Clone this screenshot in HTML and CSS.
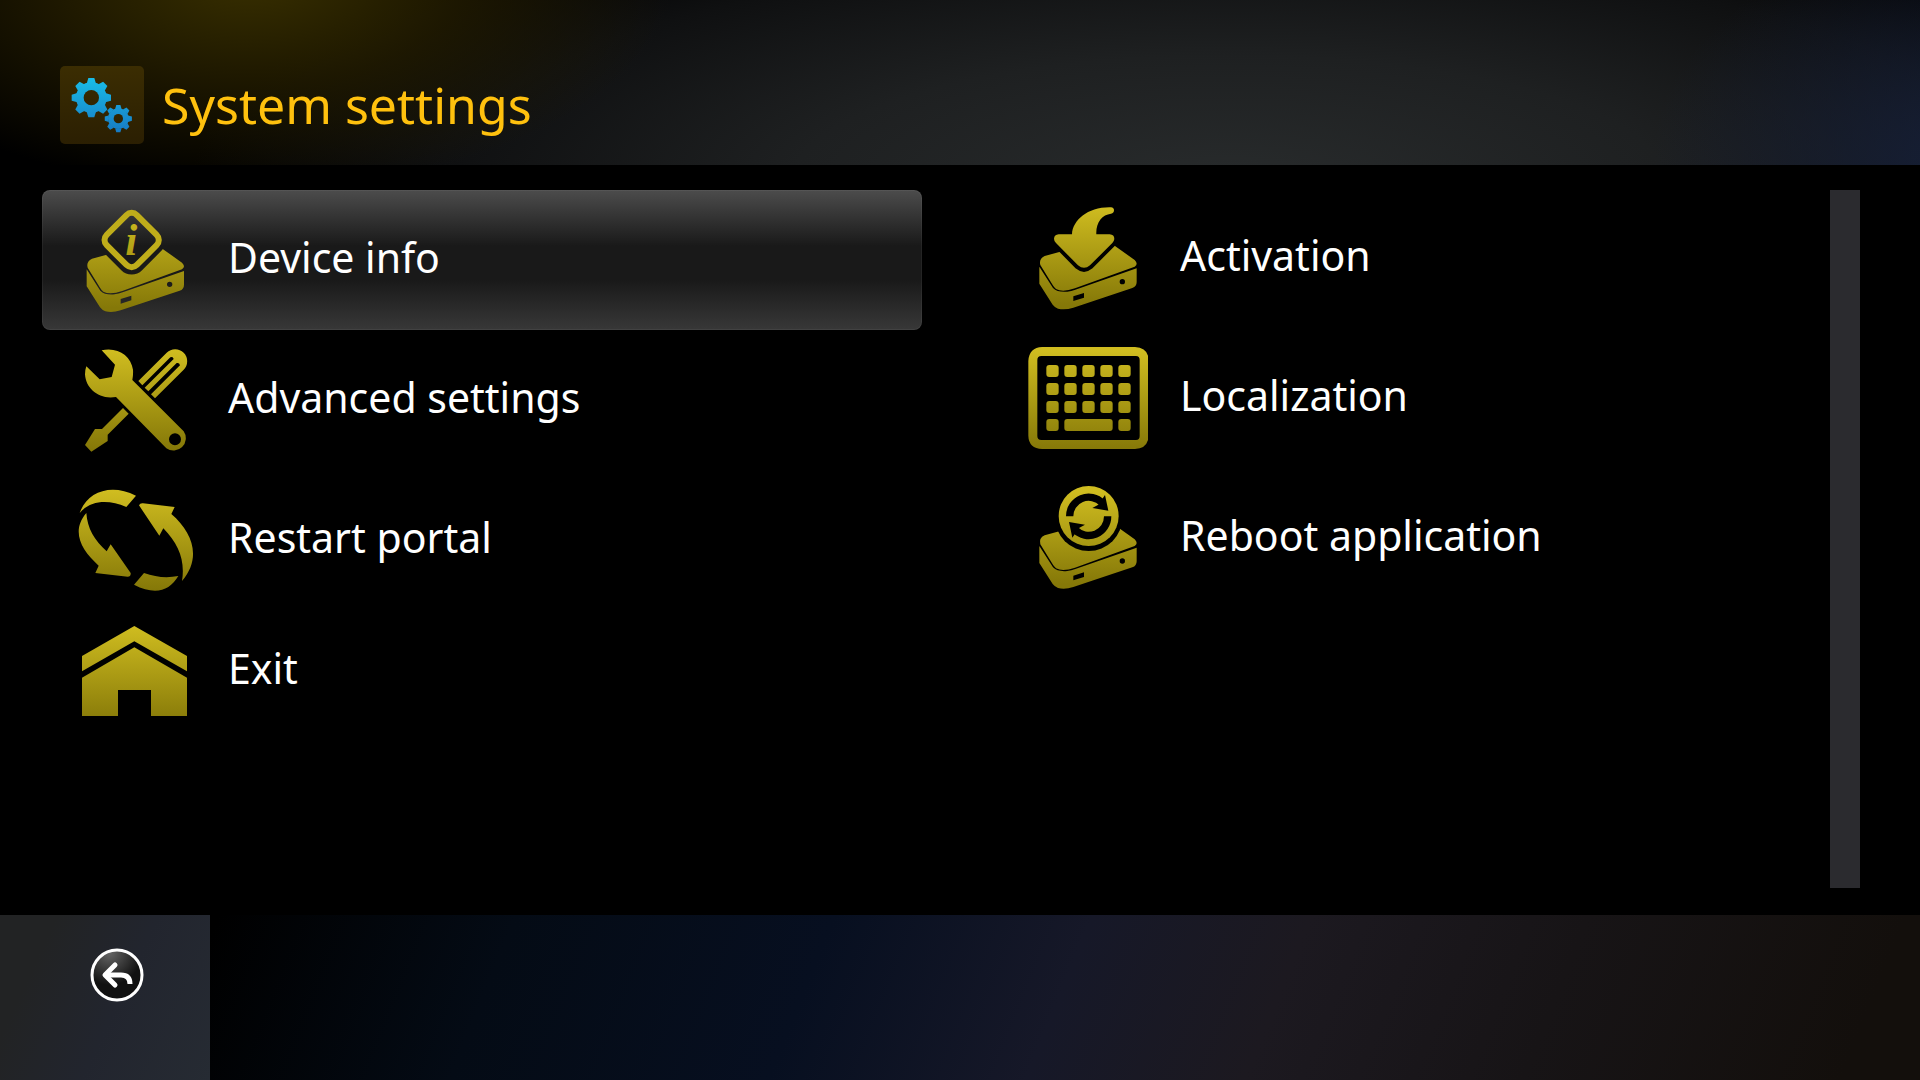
FILE: index.html
```html
<!DOCTYPE html>
<html lang="en">
<head>
<meta charset="utf-8">
<meta name="viewport" content="width=device-width, initial-scale=1">
<title>System settings</title>
<link rel="stylesheet" href="styles.css">
</head>
<body>
<svg class="defs" width="0" height="0" aria-hidden="true">
  <defs>
    <linearGradient id="gears" gradientUnits="userSpaceOnUse" x1="0" y1="84" x2="0" y2="246">
      <stop offset="0" stop-color="#19bde8"/><stop offset="1" stop-color="#177bc4"/>
    </linearGradient>
    <linearGradient id="gold" gradientUnits="userSpaceOnUse" x1="0" y1="45" x2="0" y2="345">
      <stop offset="0" stop-color="#d0bd20"/><stop offset="1" stop-color="#857808"/>
    </linearGradient>
    <linearGradient id="gold-info" gradientUnits="userSpaceOnUse" x1="0" y1="90" x2="0" y2="396">
      <stop offset="0" stop-color="#d0bd20"/><stop offset="1" stop-color="#857808"/>
    </linearGradient>
    <g id="teeth">
      <path id="tooth" d="M-14-42L-9-59H9L14-42Z"/>
      <use href="#tooth" transform="rotate(45)"/>
      <use href="#tooth" transform="rotate(90)"/>
      <use href="#tooth" transform="rotate(135)"/>
      <use href="#tooth" transform="rotate(180)"/>
      <use href="#tooth" transform="rotate(225)"/>
      <use href="#tooth" transform="rotate(270)"/>
      <use href="#tooth" transform="rotate(315)"/>
    </g>
    <mask id="gear-mask" maskUnits="userSpaceOnUse" x="60" y="48" width="252" height="234">
      <g fill="#fff">
        <use href="#teeth" transform="translate(154 143)"/>
        <circle cx="154" cy="143" r="46"/>
        <use href="#teeth" transform="translate(235 206) scale(.69)"/>
        <circle cx="235" cy="206" r="31"/>
      </g>
      <circle cx="154" cy="143" r="23"/>
      <circle cx="235" cy="206" r="14"/>
    </mask>
    <path id="box-top" d="M104 198L148 186L300 157L315 168L374 210Q386 222 374 230L195 295Q158 308 138 297Q132 292 128 285L91 225Q86 206 104 198Z"/>
    <path id="box-body" fill-rule="evenodd" d="M88 230L129 294Q143 308 172 305Q184 303 196 299L380 235V276Q380 290 367 294L190 353Q165 361 144 356Q134 352 128 344L88 281ZM190 319V333L222 323V309ZM345 275A8 8 0 1 0 329 275A8 8 0 1 0 345 275Z"/>
    <path id="arrow-in" d="M186 133C188 90 235 50 303 52Q312 53 312 61Q312 70 303 71C276 74 257 98 259 133H299Q313 134 313 147Q312 154 307 159L240 226Q222 241 204 226L138 159Q132 153 132 146Q133 134 146 133Z"/>
    <mask id="info-mask" maskUnits="userSpaceOnUse" x="138" y="84" width="360" height="312">
      <rect x="138" y="84" width="360" height="312" fill="#fff"/>
      <rect x="241" y="116" width="128" height="128" rx="22" transform="rotate(45 305 180)" stroke="#000" stroke-width="44"/>
    </mask>
    <mask id="arrow-mask" maskUnits="userSpaceOnUse" x="54" y="48" width="360" height="312">
      <rect x="54" y="48" width="360" height="312" fill="#fff"/>
      <use href="#arrow-in" transform="translate(0 2)" stroke="#000" stroke-width="20"/>
    </mask>
    <mask id="reboot-mask" maskUnits="userSpaceOnUse" x="54" y="33" width="360" height="312">
      <rect x="54" y="33" width="360" height="312" fill="#fff"/>
      <circle cx="236" cy="127" r="101"/>
    </mask>
    <mask id="sync-mask" maskUnits="userSpaceOnUse" x="54" y="33" width="360" height="312">
      <circle cx="236" cy="123" r="90" fill="#fff"/>
      <g id="sync-arrow">
        <path d="M179 124A57 57 0 0 1 277 84" fill="none" stroke="#000" stroke-width="22"/>
        <path d="M285 60L295 107L247 99L265 89Z"/>
      </g>
      <use href="#sync-arrow" transform="rotate(180 236 124)"/>
    </mask>
    <radialGradient id="gloss" cx="35%" cy="5%" r="65%">
      <stop offset="0" stop-color="#666"/><stop offset="1" stop-color="#111"/>
    </radialGradient>
  </defs>
</svg>

<div class="screen">
  <header class="header">
    <div class="badge">
      <svg class="badge-icon" viewBox="60 48 252 234" aria-hidden="true">
        <rect x="60" y="48" width="252" height="234" fill="url(#gears)" mask="url(#gear-mask)"/>
      </svg>
    </div>
    <h1 class="title">System settings</h1>
  </header>

  <main class="content">
    <ul class="menu">
      <li><button type="button" class="item item-active">
        <svg class="icon" viewBox="138 84 360 312" fill="url(#gold-info)" aria-hidden="true">
          <g mask="url(#info-mask)"><g transform="translate(82 38)" fill="url(#gold)"><use href="#box-top"/><use href="#box-body"/></g></g>
          <rect x="241" y="116" width="128" height="128" rx="22" transform="rotate(45 305 180)" fill="none" stroke="#bfad1a" stroke-width="18"/>
          <text class="info-mark" x="304" y="224" text-anchor="middle">i</text>
        </svg>
        <span class="label">Device info</span></button></li>
      <li><button type="button" class="item">
        <svg class="icon" viewBox="48 39 360 312" fill="url(#gold)" aria-hidden="true">
          <path d="M125 46C172 35 213 62 219 104Q220 120 217 135L371 289A37 37 0 0 1 319 340L168 186C116 195 77 160 75 118Q75 105 79 94L119 133L155 126L165 89ZM363 313A18 18 0 1 0 327 313A18 18 0 1 0 363 313Z" fill-rule="evenodd"/>
          <path d="M235 138L320 53A36 36 0 0 1 371 104L285 190L273 178L360 91Q358 82 350 84L265 169L254 158L341 72Q339 63 331 67L247 151Z"/>
          <path d="M189 219L206 236L143 299V318L94 350L75 330L105 282H126Z"/>
        </svg>
        <span class="label">Advanced settings</span></button></li>
      <li><button type="button" class="item">
        <svg class="icon" viewBox="48 39 360 312" fill="url(#gold)" aria-hidden="true">
          <path d="M59 114C81 51 151 24 228 62L199 96C144 72 91 76 59 114Z"/>
          <path d="M79 114C82 160 103 195 140 229L152 208L212 294Q213 305 203 305L106 294L116 272C62 224 33 168 79 114Z"/>
          <path d="M237 91Q240 84 249 85L344 96L334 117C398 172 426 248 366 318C376 256 356 207 310 160L298 182Z"/>
          <path d="M252 294Q304 313 355 303C328 349 284 361 222 329Z"/>
        </svg>
        <span class="label">Restart portal</span></button></li>
      <li><button type="button" class="item item-short">
        <svg class="icon" viewBox="48 27 360 312" fill="url(#gold)" aria-hidden="true">
          <path d="M66 138L223 48L381 138V184L223 94L66 184Z"/>
          <path d="M66 203L223 112L381 203V318H273V240H174V318H66Z"/>
        </svg>
        <span class="label">Exit</span></button></li>
    </ul>
    <ul class="menu menu-second">
      <li><button type="button" class="item">
        <svg class="icon" viewBox="54 48 360 312" fill="url(#gold)" aria-hidden="true">
          <g mask="url(#arrow-mask)"><use href="#box-top"/></g><use href="#box-body"/><use href="#arrow-in"/>
        </svg>
        <span class="label">Activation</span></button></li>
      <li><button type="button" class="item">
        <svg class="icon" viewBox="54 33 360 312" fill="url(#gold)" aria-hidden="true">
          <path fill-rule="evenodd" d="M97 36H375Q416 38 416 78V302Q414 340 375 342H97Q56 340 55 302V78Q57 38 97 36ZM94 63Q82 63 82 75V303Q82 315 94 315H378Q389 315 389 303V75Q389 63 378 63Z"/>
          <rect x="109" y="90" width="37" height="36" rx="9"/><rect x="163" y="90" width="37" height="36" rx="9"/><rect x="217" y="90" width="37" height="36" rx="9"/><rect x="271" y="90" width="37" height="36" rx="9"/><rect x="325" y="90" width="37" height="36" rx="9"/>
          <rect x="109" y="144" width="37" height="36" rx="9"/><rect x="163" y="144" width="37" height="36" rx="9"/><rect x="217" y="144" width="37" height="36" rx="9"/><rect x="271" y="144" width="37" height="36" rx="9"/><rect x="325" y="144" width="37" height="36" rx="9"/>
          <rect x="109" y="198" width="37" height="36" rx="9"/><rect x="163" y="198" width="37" height="36" rx="9"/><rect x="217" y="198" width="37" height="36" rx="9"/><rect x="271" y="198" width="37" height="36" rx="9"/><rect x="325" y="198" width="37" height="36" rx="9"/>
          <rect x="109" y="252" width="37" height="36" rx="9"/><rect x="163" y="252" width="145" height="36" rx="9"/><rect x="325" y="252" width="37" height="36" rx="9"/>
        </svg>
        <span class="label">Localization</span></button></li>
      <li><button type="button" class="item">
        <svg class="icon" viewBox="54 33 360 312" fill="url(#gold)" aria-hidden="true">
          <g mask="url(#reboot-mask)"><g transform="translate(0 -17)"><use href="#box-top"/><use href="#box-body"/></g></g>
          <rect x="140" y="33" width="192" height="182" mask="url(#sync-mask)"/>
        </svg>
        <span class="label">Reboot application</span></button></li>
    </ul>
    <div class="scrollbar"></div>
  </main>

  <footer class="footer">
    <button type="button" class="back" aria-label="Back">
      <svg class="back-icon" viewBox="0 0 54 54" aria-hidden="true">
        <circle cx="27" cy="27" r="25" fill="url(#gloss)" stroke="#fff" stroke-width="3"/>
        <path d="M16 27H31Q40 27 40 36" fill="none" stroke="#fff" stroke-width="5"/>
        <path d="M25 17L15 27L25 37" fill="none" stroke="#fff" stroke-width="5" stroke-linecap="round" stroke-linejoin="round"/>
      </svg>
    </button>
  </footer>
</div>
</body>
</html>
```
FILE: styles.css
```css
* {
  box-sizing: border-box;
}

body {
  margin: 0;
  background: #000;
  color: #fff;
  font-family: "Noto Sans", sans-serif;
}

.defs {
  position: absolute;
}

.screen {
  display: flex;
  flex-direction: column;
  min-height: 100vh;
}

.header {
  display: flex;
  align-items: center;
  gap: 18px;
  min-height: 165px;
  padding: 45px 60px 0;
  background:
    radial-gradient(ellipse 22% 210px at 13% -20px, #382f00, #231c00cc 50%, transparent),
    radial-gradient(ellipse 18% 240px at 104% 100%, #16203a, transparent),
    radial-gradient(ellipse 54% 300px at 64% 110%, #282b2c, #1e2021 42%, #0f1011 76%, transparent),
    #000;
}

.badge {
  width: 84px;
  height: 78px;
  border-radius: 5px;
  background: linear-gradient(#3b2d02, #2b1f02);
}

.badge-icon {
  display: block;
  width: 100%;
  height: 100%;
}

.title {
  margin: 0;
  color: #ffc10e;
  font-size: 50px;
  font-weight: 400;
  line-height: 60px;
}

.content {
  display: flex;
  flex: 1;
  padding: 25px 60px 27px 42px;
}

.menu {
  flex: 20;
  margin: 0 72px 0 0;
  padding: 0;
  list-style: none;
}

.menu-second {
  flex: 19;
  margin-right: 0;
}

.item {
  display: flex;
  align-items: center;
  gap: 32px;
  width: 100%;
  height: 140px;
  padding: 0 34px;
  border: 0;
  border-radius: 8px;
  background: none;
  color: #fff;
  font: inherit;
  text-align: left;
}

.menu-second .item {
  padding-bottom: 4px;
}

.item-active {
  background: linear-gradient(#4c4c4c, #191919 40%, #191919 64%, #383838);
  box-shadow: inset 0 0 0 1px #ffffff0d;
}

.item-short {
  height: 122px;
}

.icon {
  flex: none;
  width: 120px;
  height: 104px;
}

.info-mark {
  font: italic bold 130px "Liberation Serif", serif;
}

.label {
  padding-bottom: 6px;
  font-size: 41px;
  line-height: 52px;
}

.scrollbar {
  width: 30px;
  background: #2b2b2f;
}

.footer {
  display: flex;
  min-height: 165px;
  background: linear-gradient(112deg, #000 11%, #040b15 26%, #070f20 42%, #161828 55%, #1c1920 66%, #171416 80%, #130f0c 96%);
}

.back {
  display: flex;
  justify-content: center;
  width: 210px;
  padding: 33px 0 0 24px;
  border: 0;
  background: linear-gradient(115deg, #222324 20%, #22252e 55%, #262b33);
}

.back-icon {
  width: 54px;
  height: 54px;
}
```
